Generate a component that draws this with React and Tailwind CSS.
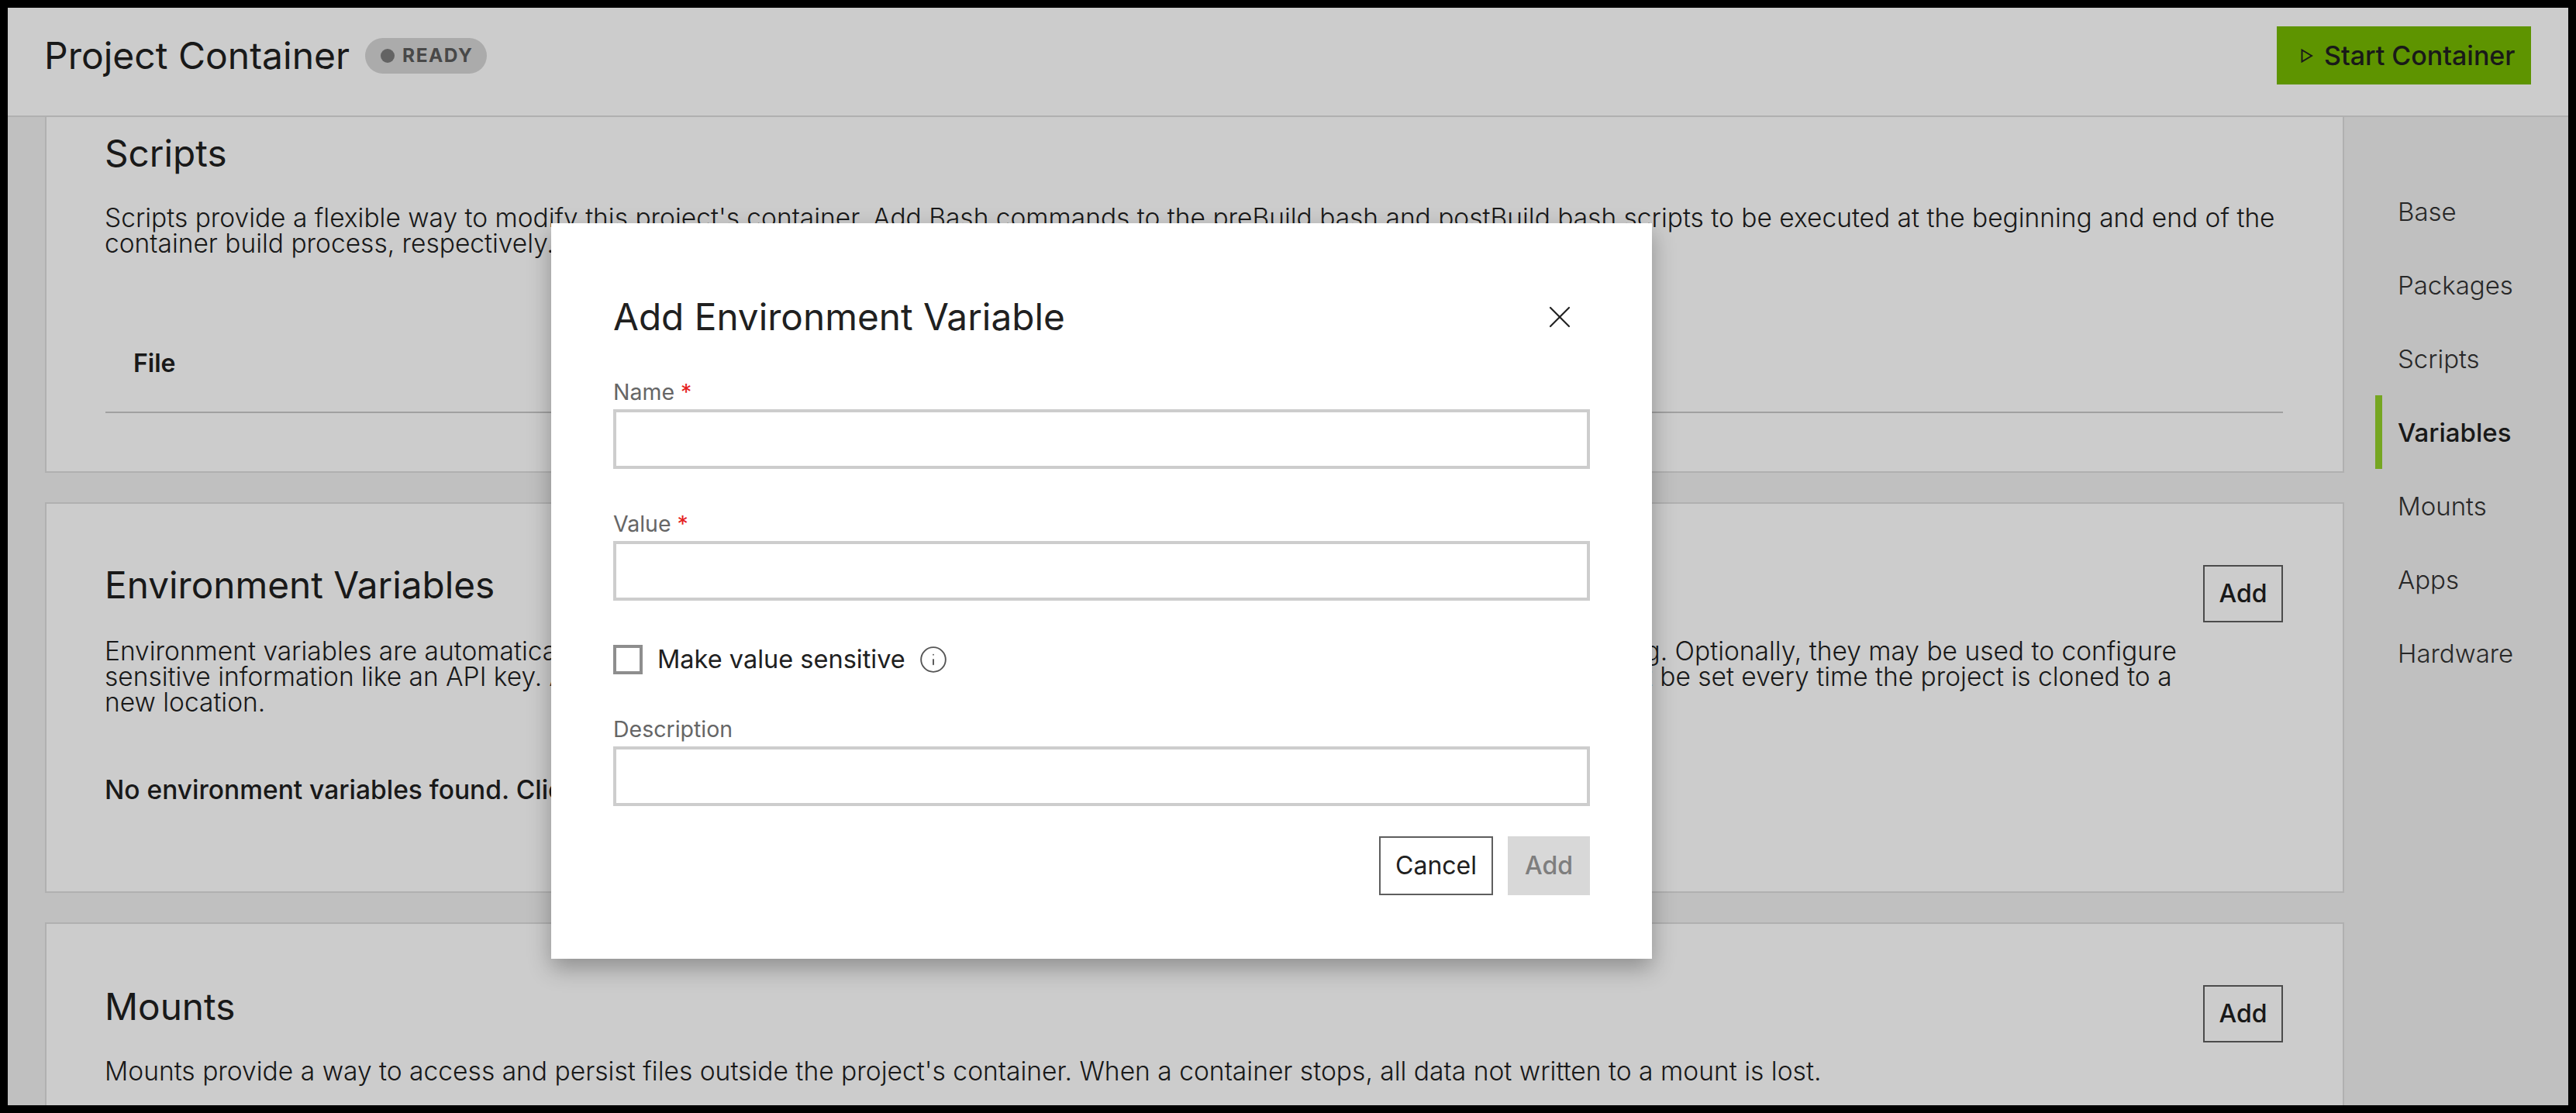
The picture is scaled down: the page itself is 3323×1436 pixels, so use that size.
import { X, Info } from 'lucide-react';

const NAV = ['Base', 'Packages', 'Scripts', 'Variables', 'Mounts', 'Apps', 'Hardware'];

function AddButton() {
  return (
    <button className="h-[74px] w-[103px] shrink-0 border-2 border-[#5e5e5e] text-[32px] font-medium text-[#202020]">
      Add
    </button>
  );
}

function Field({ label, required, className }) {
  return (
    <div className={className}>
      <label className="block h-[32px] text-[28.5px] leading-[32px] text-[#666]">
        {label}
        {required && <span className="ml-[8px] text-[#e52020]">*</span>}
      </label>
      <input className="mt-[6px] block h-[77px] w-full border-4 border-[#cdcdcd] bg-white" />
    </div>
  );
}

function Modal() {
  return (
    <div className="absolute inset-0 z-10 bg-black/20">
      {/* dialog */}
      <div className="absolute left-[701px] top-[278px] h-[949px] w-[1420px] bg-white px-[80px] pt-[96px] shadow-[0_12px_28px_rgba(0,0,0,0.3)]">
        <div className="flex h-[50px] items-center justify-between">
          <h2 className="text-[47.7px] font-normal leading-[50px] text-[#202020]">Add Environment Variable</h2>
          <button className="mr-[15px] text-[#202020]">
            <X size={48} strokeWidth={1.1} />
          </button>
        </div>
        <Field label="Name" required className="mt-[56px]" />
        <Field label="Value" required className="mt-[55px]" />
        <div className="mt-[57px] flex items-center">
          <span className="h-[38px] w-[38px] border-4 border-[#8e8e8e]" />
          <span className="ml-[19px] text-[32.5px] leading-[38px] text-[#202020]">Make value sensitive</span>
          <Info size={38} strokeWidth={1.2} className="ml-[17px] text-[#555]" />
        </div>
        <Field label="Description" className="mt-[55px]" />
        <div className="mt-[39px] flex justify-end gap-[19px]">
          <button className="h-[76px] w-[147px] border-2 border-[#5e5e5e] text-[32px] text-[#202020]">Cancel</button>
          <button className="h-[76px] w-[106px] bg-[#d8d8d8] text-[32px] font-medium text-[#7e7e7e]">Add</button>
        </div>
      </div>
    </div>
  );
}

export default function App() {
  return (
    <div className="h-screen w-screen overflow-hidden bg-black p-[10px] font-['Inter',sans-serif]">
      <div className="relative flex h-full flex-col overflow-hidden bg-[#f0f0f0] text-[#202020]">
        {/* Header */}
        <header className="flex h-[141px] shrink-0 items-center justify-between border-b-2 border-[#dcdcdc] bg-white pb-[16px] pl-[47px] pr-[48px]">
          <div className="flex items-center">
            <h1 className="text-[48px] font-normal leading-none">Project Container</h1>
            <span className="ml-[20px] flex h-[46px] w-[157px] items-center rounded-full bg-[#d6d6d6] pl-[20px]">
              <span className="h-[18px] w-[18px] rounded-full bg-[#7c7c7c]" />
              <span className="ml-[10px] text-[24.5px] font-bold tracking-[1.5px] text-[#5a5a5a]">READY</span>
            </span>
          </div>
          <button className="flex h-[75px] w-[328px] items-center bg-[#76b900] pl-[31px] text-[34px] font-medium">
            <svg width="16" height="18" viewBox="0 0 16 18" fill="none" stroke="currentColor" strokeWidth="2">
              <path d="M1.5 1.5 L14 9 L1.5 16.5 Z" />
            </svg>
            <span className="ml-[14px]">Start Container</span>
          </button>
        </header>

        <div className="flex min-h-0 flex-1">
          <main className="flex w-[3014px] shrink-0 flex-col gap-[38px] pl-[48px]">
            {/* Scripts, scrolled under the header */}
            <section className="h-[459px] shrink-0 border-x-2 border-b-2 border-[#dcdcdc] bg-white pl-[75px] pr-[77px] pt-[22px]">
              <h2 className="text-[47.7px] font-normal leading-[50px]">Scripts</h2>
              <p className="mt-[42px] text-[33.5px] font-light leading-[33px] text-[#202020]">
                Scripts provide a flexible way to modify this project's container. Add Bash commands to the preBuild bash and postBuild bash scripts to be executed at the beginning and end of the container build process, respectively.
              </p>
              <div className="ml-[1px] mt-[72px] flex h-[130px] items-center border-b-2 border-[#c8c8c8] pl-[36px] pt-[4px] text-[32px] font-semibold">File</div>
            </section>

            {/* Environment Variables */}
            <section className="h-[504px] shrink-0 border-2 border-[#dcdcdc] bg-white pl-[75px] pr-[77px] pt-[79px]">
              <div className="flex justify-between">
                <h2 className="mt-[1px] text-[47.7px] font-normal leading-[50px]">Environment Variables</h2>
                <AddButton />
              </div>
              <p className="mt-[21px] w-[2680px] text-[33.5px] font-light leading-[33px] text-[#202020]">
                Environment variables are automatically set in the project's container and can be used to configure the behavior while debugging. Optionally, they may be used to configure sensitive information like an API key. Any sensitive values are stored outside version control, so they are not committed and must be set every time the project is cloned to a new location.
              </p>
              <p className="mt-[80px] text-[33.5px] font-medium leading-[33px]">
                No environment variables found. Click Add to create a new environment variable.
              </p>
            </section>

            {/* Mounts */}
            <section className="flex-1 border-x-2 border-t-2 border-[#dcdcdc] bg-white pl-[75px] pr-[77px] pt-[79px]">
              <div className="flex justify-between">
                <h2 className="mt-[3px] text-[47.7px] font-normal leading-[50px]">Mounts</h2>
                <AddButton />
              </div>
              <p className="mt-[20px] text-[33.6px] font-light leading-[33px] text-[#202020]">
                Mounts provide a way to access and persist files outside the project's container. When a container stops, all data not written to a mount is lost.
              </p>
            </section>
          </main>

          {/* Section nav */}
          <nav className="flex-1 pl-[40px] pt-[74px]">
            {NAV.map((item) => (
              <div
                key={item}
                className={`flex h-[95px] items-center border-l-[9px] pl-[20px] pt-[3px] text-[33px] ${
                  item === 'Variables'
                    ? 'border-[#93d02a] font-medium text-[#202020]'
                    : 'border-transparent font-light text-[#333]'
                }`}
              >
                {item}
              </div>
            ))}
          </nav>
        </div>

        <Modal />
      </div>
    </div>
  );
}
